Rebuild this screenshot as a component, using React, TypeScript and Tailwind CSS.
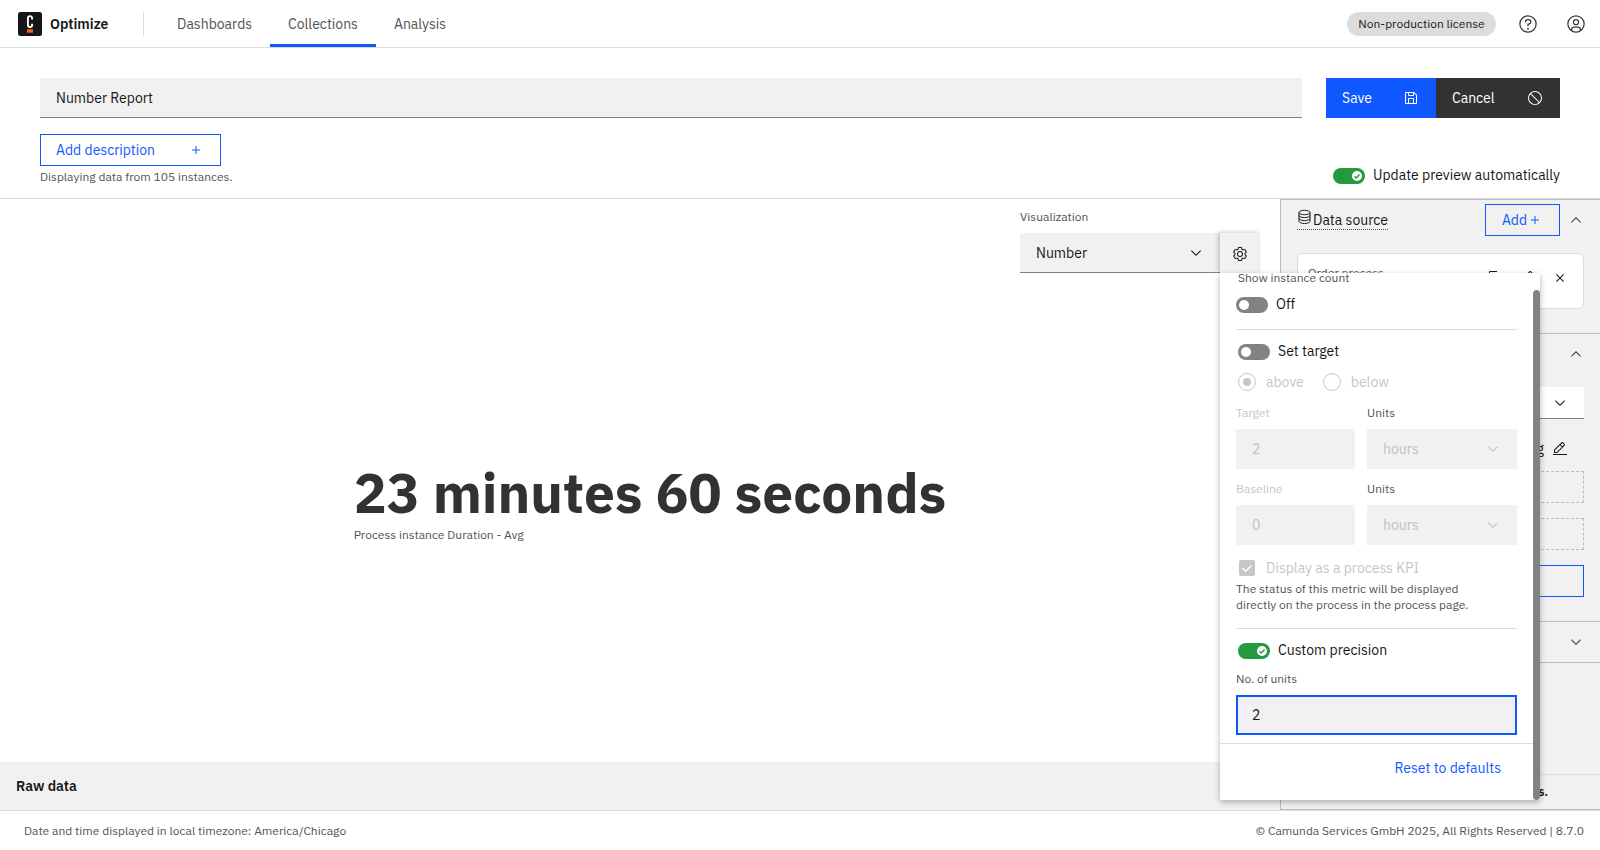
import React, { useState } from 'react';

const ICONS = {
  chevronDown: ['M16 22L6 12l1.4-1.4 8.6 8.6 8.6-8.6L26 12z'],
  chevronUp: ['M16 10l10 10-1.4 1.4-8.6-8.6-8.6 8.6L6 20z'],
  add: ['M17 15V8h-2v7H8v2h7v7h2v-7h7v-2z'],
  close: ['M17.41 16L24 9.41 22.59 8 16 14.59 9.41 8 8 9.41 14.59 16 8 22.59 9.41 24 16 17.41 22.59 24 24 22.59z'],
  save: [
    'M27.71,9.29l-5-5A1,1,0,0,0,22,4H6A2,2,0,0,0,4,6V26a2,2,0,0,0,2,2H26a2,2,0,0,0,2-2V10A1,1,0,0,0,27.71,9.29ZM12,6h8v4H12Zm8,20H12V18h8Zm2,0V18a2,2,0,0,0-2-2H12a2,2,0,0,0-2,2v8H6V6h4v4a2,2,0,0,0,2,2h8a2,2,0,0,0,2-2V6.41l4,4V26Z',
  ],
  error: [
    'M2,16A14,14,0,1,0,16,2,14,14,0,0,0,2,16Zm23.15,7.75L8.25,6.85a12,12,0,0,1,16.9,16.9ZM8.24,25.16A12,12,0,0,1,6.84,8.27L23.73,25.16a12,12,0,0,1-15.49,0Z',
  ],
  help: [
    'M16,2A14,14,0,1,0,30,16,14,14,0,0,0,16,2Zm0,26A12,12,0,1,1,28,16,12,12,0,0,1,16,28Z',
    'M14.5,23.5a1.5,1.5,0,1,0,3,0a1.5,1.5,0,1,0,-3,0',
    'M17,8H15.5A4.49,4.49,0,0,0,11,12.5V13h2v-.5A2.5,2.5,0,0,1,15.5,10H17a2.5,2.5,0,0,1,0,5H15v4.5h2V17a4.5,4.5,0,0,0,0-9Z',
  ],
  user: [
    'M16,8a5,5,0,1,0,5,5A5,5,0,0,0,16,8Zm0,8a3,3,0,1,1,3-3A3,3,0,0,1,16,16Z',
    'M16,2A14,14,0,1,0,30,16,14,14,0,0,0,16,2ZM10,26.38V25A3,3,0,0,1,13,22h6a3,3,0,0,1,3,3v1.38a11.9,11.9,0,0,1-12,0Zm13.99-1.45A5,5,0,0,0,19,20H13a5,5,0,0,0-4.99,4.93,12,12,0,1,1,15.98,0Z',
  ],
  settings: [
    'M27,16.76c0-.25,0-.5,0-.76s0-.51,0-.77l1.92-1.68A2,2,0,0,0,29.3,11L26.94,7a2,2,0,0,0-1.73-1,2,2,0,0,0-.64.1l-2.43.82a11.35,11.35,0,0,0-1.31-.75l-.51-2.52a2,2,0,0,0-2-1.61H13.64a2,2,0,0,0-2,1.61l-.51,2.52a11.48,11.48,0,0,0-1.32.75L7.43,6.06A2,2,0,0,0,6.79,6,2,2,0,0,0,5.06,7L2.7,11a2,2,0,0,0,.41,2.51L5,15.24c0,.25,0,.5,0,.76s0,.51,0,.77L3.11,18.45A2,2,0,0,0,2.7,21L5.06,25a2,2,0,0,0,1.73,1,2,2,0,0,0,.64-.1l2.43-.82a11.35,11.35,0,0,0,1.31.75l.51,2.52a2,2,0,0,0,2,1.61h4.72a2,2,0,0,0,2-1.61l.51-2.52a11.48,11.48,0,0,0,1.32-.75l2.42.82a2,2,0,0,0,.64.1,2,2,0,0,0,1.73-1L29.3,21a2,2,0,0,0-.41-2.51ZM25.21,24l-3.43-1.16a8.86,8.86,0,0,1-2.71,1.57L18.36,28H13.64l-.71-3.55a9.36,9.36,0,0,1-2.7-1.57L6.79,24,4.43,20l2.72-2.4a8.9,8.9,0,0,1,0-3.13L4.43,12,6.79,8l3.43,1.16a8.86,8.86,0,0,1,2.71-1.57L13.64,4h4.72l.71,3.55a9.36,9.36,0,0,1,2.7,1.57L25.21,8,27.57,12l-2.72,2.4a8.9,8.9,0,0,1,0,3.13L27.57,20Z',
    'M16,22a6,6,0,1,1,6-6A5.94,5.94,0,0,1,16,22Zm0-10a3.91,3.91,0,0,0-4,4,3.91,3.91,0,0,0,4,4,3.91,3.91,0,0,0,4-4A3.91,3.91,0,0,0,16,12Z',
  ],
  edit: [
    'M2 26H30V28H2z',
    'M25.4,9c.8-.8,.8-2,0-2.8l-3.6-3.6c-.8-.8-2-.8-2.8,0l-15,15V24h6.4L25.4,9zM20.4,4L24,7.6l-3,3L17.4,7L20.4,4zM6,22v-3.6l10-10,3.6,3.6l-10,10H6z',
  ],
  copy: ['M28,10V28H10V10H28m0-2H10a2,2,0,0,0-2,2V28a2,2,0,0,0,2,2H28a2,2,0,0,0,2-2V10a2,2,0,0,0-2-2Z', 'M4,18H2V4A2,2,0,0,1,4,2H18V4H4Z'],
};

function Icon({ name, className = 'size-4' }: { name: keyof typeof ICONS; className?: string }) {
  return (
    <svg viewBox="0 0 32 32" fill="currentColor" fillRule="evenodd" aria-hidden="true" className={`shrink-0 ${className}`}>
      {ICONS[name].map((d) => (
        <path key={d} d={d} />
      ))}
    </svg>
  );
}

function DatabaseIcon() {
  return (
    <svg viewBox="0 2 16 16" fill="none" stroke="currentColor" aria-hidden="true" className="size-4 shrink-0 overflow-visible">
      <ellipse cx="7.500" cy="3.5" rx="5.5" ry="2.2" />
      <path d="M2 3.5v8.800c0 1.2 2.5 2.200 5.5 2.200s5.5-1 5.5-2.200v-8.800" />
      <path d="M2 6.400c0 1.2 2.5 2.2 5.5 2.2s5.5-1 5.5-2.2M2 9.400c0 1.2 2.5 2.2 5.5 2.2s5.5-1 5.5-2.2" />
    </svg>
  );
}

function Logo() {
  return (
    <svg viewBox="0 0 24 24" aria-hidden="true" className="size-6 shrink-0">
      <rect width="24" height="24" rx="2.5" fill="#161616" />
      <path
        d="M14.100 7.500V6.200a2 2 0 0 0-4.200 0v6.900a2 2 0 0 0 4.200 0v-1.300"
        fill="none"
        stroke="#fff"
        strokeWidth="1.900"
      />
      <rect x="9" y="17.300" width="6" height="3.400" fill="#fc5d0d" />
    </svg>
  );
}

function Toggle({ id, label, on = false }: { id: string; label: string; on?: boolean }) {
  const [checked, setChecked] = useState(on);
  return (
    <label htmlFor={id} className="flex h-4 items-center gap-2 text-sm leading-4 text-[#161616]">
      <input
        id={id}
        type="checkbox"
        role="switch"
        checked={checked}
        onChange={() => setChecked(!checked)}
        className="peer sr-only"
      />
      <span
        className={`flex h-4 w-8 items-center rounded-full px-[3px] ${checked ? 'justify-end bg-[#24993f]' : 'justify-start bg-[#828282]'}`}
      >
        <svg viewBox="0 0 10 10" className="size-[10px]" aria-hidden="true">
          <circle cx="5" cy="5" r="5" fill="#fff" />
          {checked && <path d="M2.500 5.200l1.800 1.700 3.200-3.400" fill="none" stroke="#24993f" strokeWidth="1.400" />}
        </svg>
      </span>
      <span className="pb-[2px]">{label}</span>
    </label>
  );
}

function Dropdown({ id, value, disabled = false, tone }: { id: string; value: string; disabled?: boolean; tone: string }) {
  return (
    <div className={`grid h-10 items-center ${tone}`}>
      <select
        id={id}
        disabled={disabled}
        defaultValue={value}
        className="col-start-1 row-start-1 h-full w-full appearance-none bg-transparent px-4 text-sm opacity-100 outline-none"
      >
        <option>{value}</option>
      </select>
      <Icon name="chevronDown" className="pointer-events-none col-start-1 row-start-1 mr-4 size-4 justify-self-end" />
    </div>
  );
}

function TargetRow({ id, label, value }: { id: string; label: string; value: string }) {
  return (
    <div className="flex gap-3">
      <div className="flex min-w-0 flex-1 flex-col gap-2">
        <label htmlFor={id} className="text-xs leading-4 text-[#c6c6c6]">
          {label}
        </label>
        <input id={id} disabled defaultValue={value} className="h-10 w-full bg-[#f1f1f1] px-4 text-sm text-[#c1c1c1]" />
      </div>
      <div className="flex w-[150px] flex-col gap-2">
        <label htmlFor={`${id}-units`} className="text-xs leading-4 text-[#525252]">
          Units
        </label>
        <Dropdown id={`${id}-units`} value="hours" disabled tone="bg-[#f1f1f1] text-[#c1c1c1]" />
      </div>
    </div>
  );
}

function Header() {
  const tabs = ['Dashboards', 'Collections', 'Analysis'];
  return (
    <header className="flex h-12 items-center border-b border-[#dcdcdc] pr-[14px] pl-[18px]">
      <a href="#home" className="flex w-[125px] items-center gap-2 text-sm font-semibold text-[#161616]">
        <Logo />
        Optimize
      </a>
      <nav className="flex h-full items-center">
        <div className="mr-[15px] h-6 w-px bg-[#dcdcdc]" />
        {tabs.map((tab) => (
          <a
            key={tab}
            href={`#${tab.toLowerCase()}`}
            className={`flex h-full items-center border-y-[3px] border-t-transparent px-[18px] text-sm text-[#525252] ${tab === 'Collections' ? 'border-b-[#0f58ff]' : 'border-b-transparent'}`}
          >
            {tab}
          </a>
        ))}
      </nav>
      <div className="ml-auto flex items-center">
        <span className="flex h-6 w-[149px] items-center justify-center rounded-full bg-[#dcdcdc] text-xs text-[#161616]">
          Non-production license
        </span>
        <button aria-label="Help" className="ml-[22px] text-[#393939]">
          <Icon name="help" className="size-5" />
        </button>
        <button aria-label="User" className="ml-7 text-[#393939]">
          <Icon name="user" className="size-5" />
        </button>
      </div>
    </header>
  );
}

function ReportHead() {
  return (
    <section className="border-b border-[#dcdcdc] px-10 pt-[30px] pb-[13px]">
      <div className="flex gap-6">
        <input
          aria-label="Report name"
          defaultValue="Number Report"
          className="h-10 min-w-0 flex-1 border-b border-[#828282] bg-[#f1f1f1] px-4 text-sm text-[#161616] outline-none"
        />
        <div className="flex text-sm text-white">
          <button className="flex h-10 w-[110px] items-center justify-between bg-[#0f58ff] pr-[17px] pl-4">
            Save
            <Icon name="save" />
          </button>
          <button className="flex h-10 w-[124px] items-center justify-between bg-[#323232] pr-[17px] pl-4">
            Cancel
            <Icon name="error" />
          </button>
        </div>
      </div>
      <div className="mt-4 flex items-end justify-between">
        <div>
          <button className="flex h-8 w-[181px] items-center justify-between border border-[#0f58ff] pr-4 pl-[15px] text-sm text-[#0f58ff]">
            Add description
            <Icon name="add" />
          </button>
          <p className="mt-[3px] text-xs leading-4 text-[#525252]">Displaying data from 105 instances.</p>
        </div>
        <div className="pb-px">
          <Toggle id="auto-preview" label="Update preview automatically" on />
        </div>
      </div>
    </section>
  );
}

function SettingsPopover() {
  return (
    <div className="absolute top-full left-0 z-10 flex h-[527px] w-80 bg-white shadow-[0_2px_6px_rgba(0,0,0,0.3)]">
      <div className="flex min-w-0 flex-1 flex-col">
        <div className="px-4">
          <p className="pl-[2px] text-xs leading-[10px] text-[#525252]">Show instance count</p>
          <div className="mt-[14px]">
            <Toggle id="instance-count" label="Off" />
          </div>
          <hr className="mt-4 border-[#dcdcdc]" />
          <div className="mt-[14px] pl-[2px]">
            <Toggle id="set-target" label="Set target" />
          </div>
          <div className="mt-3 flex gap-[19px] pl-[2px] text-sm leading-5 text-[#c6c6c6]">
            {['above', 'below'].map((side) => (
              <label key={side} className="flex items-center gap-[10px]">
                <input
                  type="radio"
                  name="target-side"
                  disabled
                  defaultChecked={side === 'above'}
                  className="grid size-[18px] appearance-none place-items-center rounded-full border border-[#c6c6c6] before:size-2 before:rounded-full checked:before:bg-[#c6c6c6]"
                />
                {side}
              </label>
            ))}
          </div>
          <div className="mt-[13px] flex flex-col gap-3">
            <TargetRow id="target" label="Target" value="2" />
            <TargetRow id="baseline" label="Baseline" value="0" />
          </div>
          <label className="mt-[13px] flex items-center gap-[11px] pl-[3px] text-sm leading-5 text-[#c6c6c6]">
            <span className="grid">
              <input
                type="checkbox"
                disabled
                defaultChecked
                className="col-start-1 row-start-1 size-4 appearance-none rounded-[2px] bg-[#c6c6c6]"
              />
              <svg viewBox="0 0 16 16" className="col-start-1 row-start-1 size-4" aria-hidden="true">
                <path d="M3.500 8l3.200 3.200 6-6" fill="none" stroke="#fff" strokeWidth="1.400" />
              </svg>
            </span>
            Display as a process KPI
          </label>
          <p className="mt-[3px] text-xs leading-4 text-[#525252]">
            The status of this metric will be displayed
            <br />
            directly on the process in the process page.
          </p>
          <hr className="mt-[15px] border-[#dcdcdc]" />
          <div className="mt-[14px] pl-[2px]">
            <Toggle id="custom-precision" label="Custom precision" on />
          </div>
          <label htmlFor="units" className="mt-3 block text-xs leading-4 text-[#525252]">
            No. of units
          </label>
          <input
            id="units"
            defaultValue="2"
            className="mt-2 block h-10 w-full border-2 border-[#0f58ff] bg-[#f1f1f1] px-[14px] text-sm text-[#161616] outline-none"
          />
        </div>
        <div className="mt-2 flex justify-end border-t border-[#dcdcdc] pt-4 pr-8">
          <button className="text-sm leading-4 text-[#0f58ff]">Reset to defaults</button>
        </div>
      </div>
      <div className="mt-[17px] w-[7px] rounded-full bg-[#828282]" />
    </div>
  );
}

function ReportView() {
  return (
    <main className="flex min-w-0 flex-1 flex-col">
      <div className="flex justify-end pt-[10px] pr-5">
        <div className="flex items-end">
          <div className="w-[200px]">
            <label htmlFor="visualization" className="block text-xs leading-4 text-[#525252]">
              Visualization
            </label>
            <div className="mt-2">
              <Dropdown id="visualization" value="Number" tone="border-b border-[#828282] bg-[#f1f1f1] text-[#161616]" />
            </div>
          </div>
          <div className="relative">
            <button
              aria-label="Visualization settings"
              className="grid h-10 w-10 place-items-center bg-[#f1f1f1] pt-[2px] text-[#161616] shadow-[-2px_-1px_4px_rgba(0,0,0,0.2)]"
            >
              <Icon name="settings" />
            </button>
            <SettingsPopover />
          </div>
        </div>
      </div>
      <div className="grid flex-1 place-items-center">
        <div className="pb-[30px] pl-5">
          <h1 className="text-[55px] leading-16 font-bold text-[#323232]">23 minutes 60 seconds</h1>
          <p className="text-xs leading-5 text-[#525252]">Process instance Duration - Avg</p>
        </div>
      </div>
      <h2 className="flex h-12 items-center bg-[#f1f1f1] px-4 text-sm font-semibold text-[#161616]">Raw data</h2>
    </main>
  );
}

function Sidebar() {
  return (
    <aside className="flex w-80 flex-col border border-r-0 border-[#bcbcbc] bg-[#f1f1f1] text-[#161616]">
      <section className="h-[134px] border-b border-[#bcbcbc] px-4 pt-1">
        <div className="flex h-8 items-center">
          <h3 className="flex border-b border-dotted border-[#525252] text-sm leading-[18px]">
            <DatabaseIcon />
            Data source
          </h3>
          <button className="ml-auto flex h-8 w-[75px] items-center justify-center border border-[#0f58ff] text-sm text-[#0f58ff]">
            Add
            <Icon name="add" />
          </button>
          <button aria-label="Collapse data source" className="ml-2 text-[#393939]">
            <Icon name="chevronUp" />
          </button>
        </div>
        <div className="mt-[17px] flex h-14 items-start rounded-md border border-[#dcdcdc] bg-white px-[10px]">
          <p className="pt-[11px] text-xs leading-4 text-[#525252]">Order process</p>
          <div className="ml-auto flex items-center gap-4 pt-4 pr-[5px]">
            <button aria-label="Copy source">
              <Icon name="copy" />
            </button>
            <button aria-label="Edit source">
              <Icon name="edit" />
            </button>
            <button aria-label="Remove source">
              <Icon name="close" />
            </button>
          </div>
        </div>
      </section>
      <section className="flex h-[288px] flex-col border-b border-[#bcbcbc] px-4 pt-3">
        <button aria-label="Collapse report setup" className="self-end text-[#393939]">
          <Icon name="chevronUp" />
        </button>
        <div className="mt-[25px] flex h-8 items-center justify-end border-b border-[#828282] bg-white pr-4">
          <Icon name="chevronDown" />
        </div>
        <div className="mt-[22px] flex h-4 items-center justify-end gap-2 pr-4 text-sm">
          Avg
          <Icon name="edit" />
        </div>
        <div className="mt-[14px] h-8 shrink-0 border border-dashed border-[#bcbcbc]" />
        <div className="mt-[15px] h-8 shrink-0 border border-dashed border-[#bcbcbc]" />
        <div className="mt-[15px] h-8 shrink-0 border border-[#0f58ff]" />
      </section>
      <section className="flex h-[41px] items-center justify-end border-b border-[#bcbcbc] pr-4">
        <button aria-label="Expand filters" className="text-[#393939]">
          <Icon name="chevronDown" />
        </button>
      </section>
      <p className="mt-auto flex h-[35px] items-center justify-end border-t border-[#dcdcdc] pr-[52px] text-xs font-semibold">
        Displaying data from 105 instances.
      </p>
    </aside>
  );
}

export default function App() {
  return (
    <div className="flex min-h-screen flex-col bg-white font-['IBM_Plex_Sans',Roboto,sans-serif]">
      <Header />
      <ReportHead />
      <div className="flex flex-1">
        <ReportView />
        <Sidebar />
      </div>
      <footer className="flex h-10 items-center justify-between border-t border-[#dcdcdc] pr-4 pl-6 text-xs text-[#525252]">
        <span>Date and time displayed in local timezone: America/Chicago</span>
        <span>© Camunda Services GmbH 2025, All Rights Reserved | 8.7.0</span>
      </footer>
    </div>
  );
}
